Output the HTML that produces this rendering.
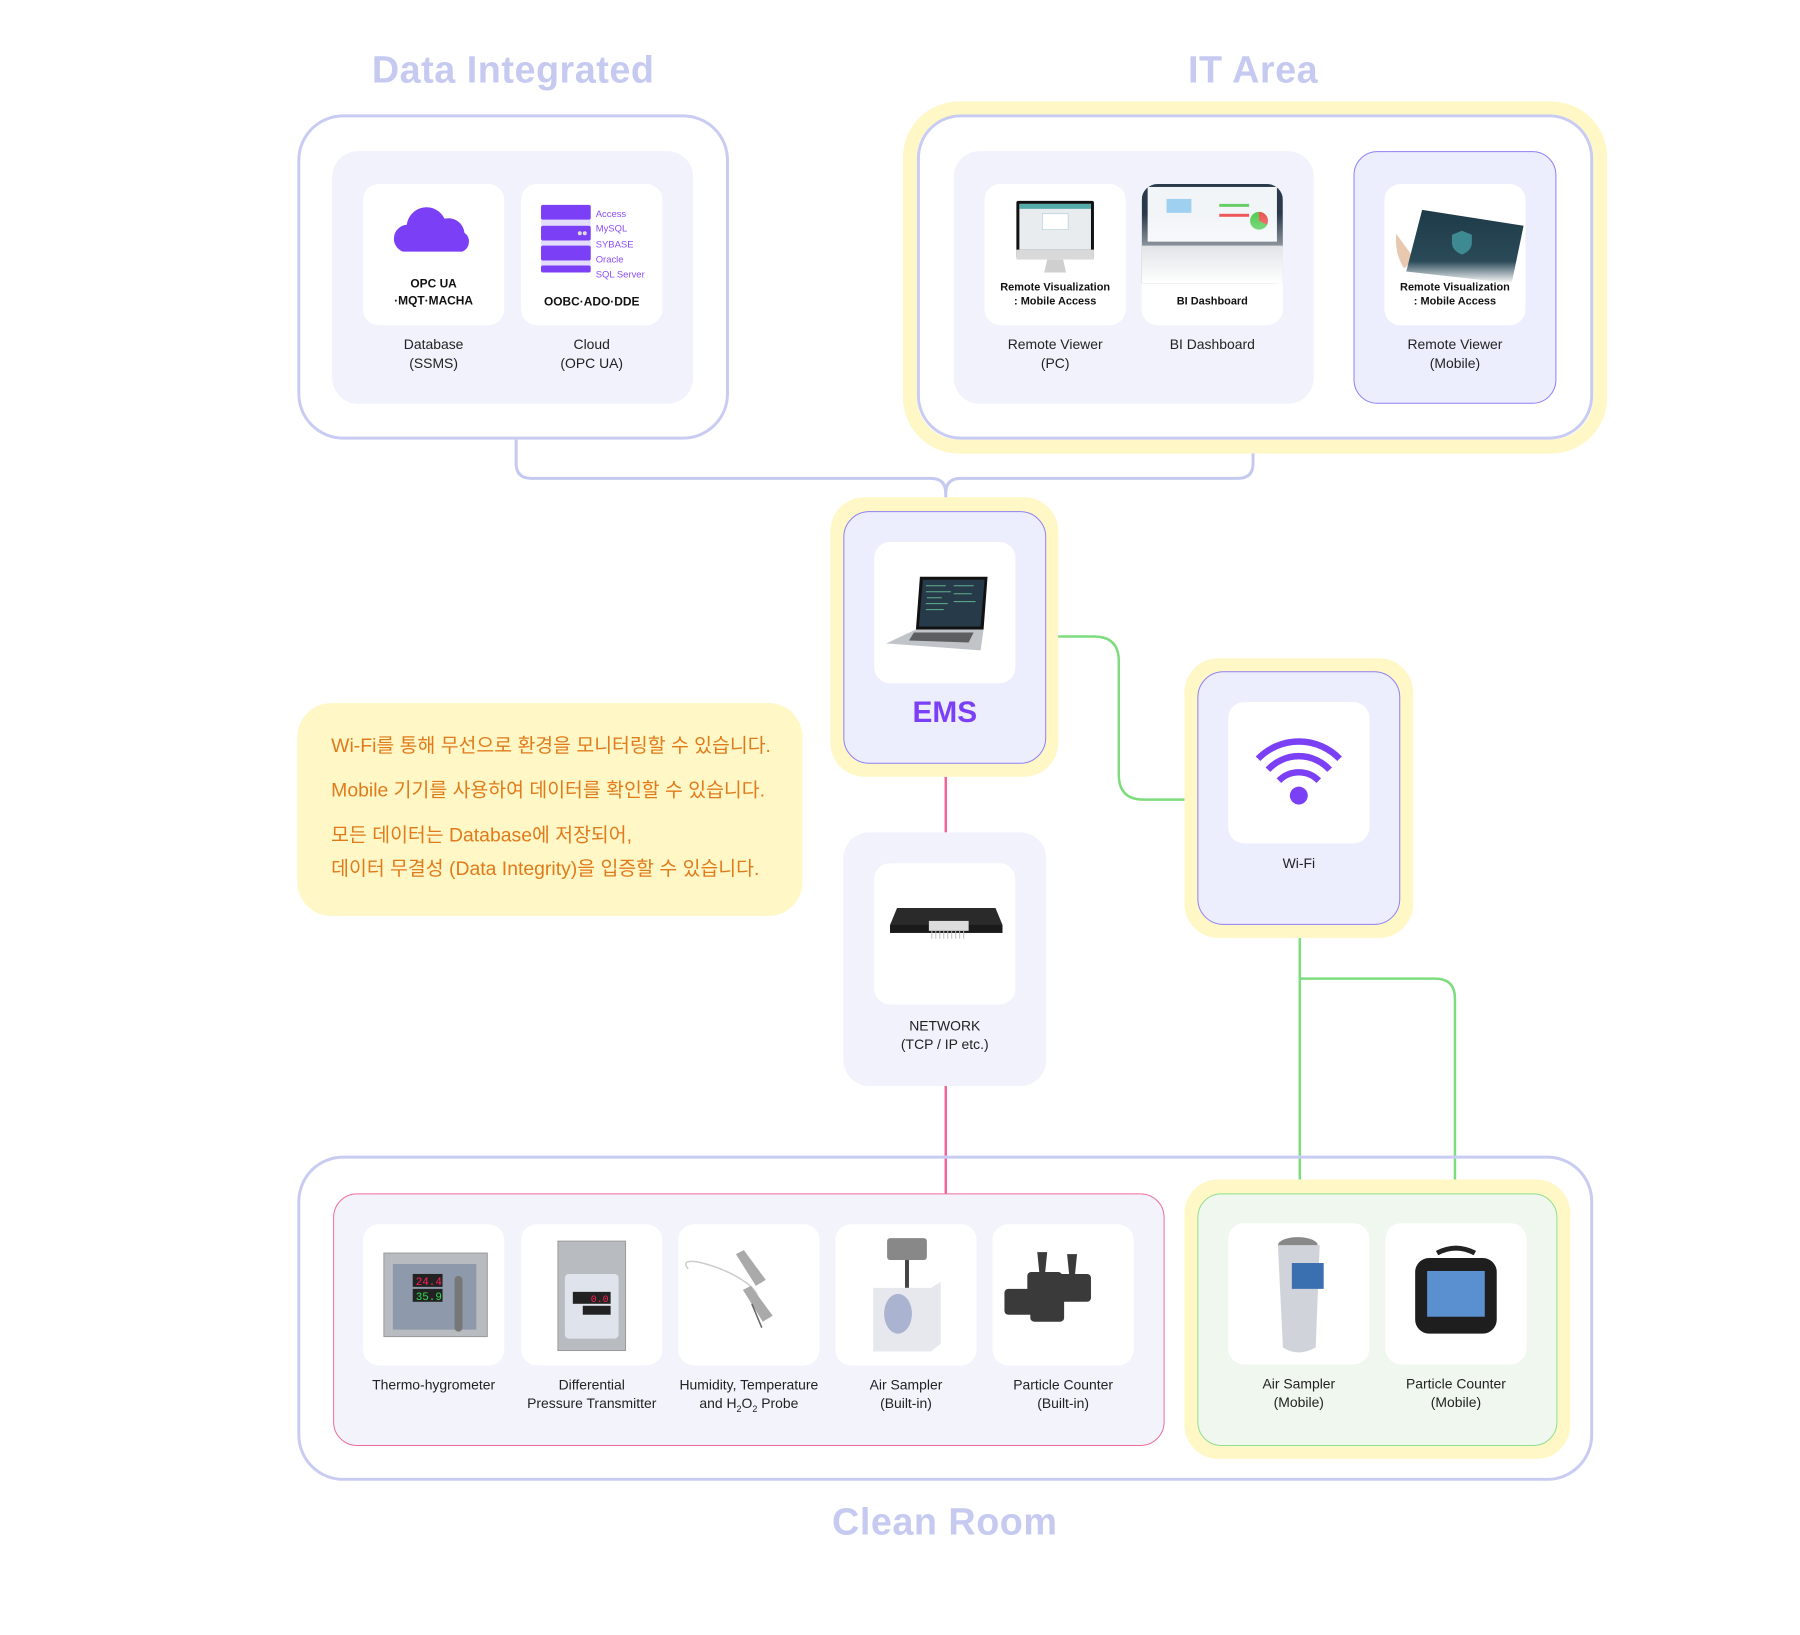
<!DOCTYPE html>
<html><head><meta charset="utf-8">
<style>
*{margin:0;padding:0;box-sizing:border-box}
body{width:1800px;height:1635px;background:#fff;position:relative;font-family:"Liberation Sans","Noto Sans CJK KR",sans-serif;color:#222;overflow:hidden}
#w{position:absolute;left:0;top:0;width:1800px;height:1635px;transform:scale(0.9945);transform-origin:0 0}
.a{position:absolute}
.title{position:absolute;font-weight:bold;color:#c6caf1;font-size:38px;text-align:center;width:500px;letter-spacing:0.5px}
.card{position:absolute;background:#fff;border-radius:16px;width:142px;height:142px;overflow:hidden}
.lbl{position:absolute;width:170px;text-align:center;font-size:14px;line-height:19px;color:#222}
.ct{position:absolute;left:0;width:142px;text-align:center;font-size:11px;font-weight:bold;line-height:14px;color:#111}
</style></head><body><div id="w">

<svg class="a" style="left:0;top:0" width="1800" height="1635">
<path d="M519 442 V466 Q519 481 534 481 H936 Q951 481 951 496 V514" fill="none" stroke="#c5c9f0" stroke-width="3"/>
<path d="M1260 456 V466 Q1260 481 1245 481 H966 Q951 481 951 496" fill="none" stroke="#c5c9f0" stroke-width="3"/>
<path d="M951 781 V837 M951 1092 V1200" fill="none" stroke="#f0649a" stroke-width="2.5"/>
<path d="M1052 640 H1100 Q1125 640 1125 665 V779 Q1125 804 1150 804 H1204" fill="none" stroke="#7ddc7d" stroke-width="2.5"/>
<path d="M1307 943 V1200 M1307 984 H1443 Q1463 984 1463 1004 V1200" fill="none" stroke="#7ddc7d" stroke-width="2.5"/>
</svg>

<div class="title" style="left:266px;top:50px">Data Integrated</div>
<div class="a" style="left:299px;top:115px;width:434px;height:327px;border:3px solid #c9ccf2;border-radius:46px"></div>
<div class="a" style="left:334px;top:152px;width:363px;height:254px;background:#f1f2fb;border-radius:26px"></div>
<div class="card" style="left:365px;top:185px">
 <svg class="a" style="left:0;top:0" width="142" height="80"><path d="M40 68 a14 14 0 0 1 4-27 a20 20 0 0 1 38-6 a16 16 0 0 1 20 14 a11 11 0 0 1 -2 19z" fill="#7b3ff6"/></svg>
 <div class="ct" style="top:92px;font-size:12px;line-height:17px">OPC UA<br>·MQT·MACHA</div>
</div>
<div class="card" style="left:524px;top:185px">
 <svg class="a" style="left:0;top:0" width="142" height="90">
  <rect x="20" y="21" width="50" height="15" rx="2" fill="#7b3ff6"/><rect x="20" y="36" width="50" height="6" fill="#e3dcfb"/>
  <rect x="20" y="42" width="50" height="15" rx="2" fill="#7b3ff6"/><circle cx="59" cy="49.5" r="2" fill="#ddd"/><circle cx="64" cy="49.5" r="2" fill="#ddd"/>
  <rect x="20" y="57" width="50" height="6" fill="#e3dcfb"/>
  <rect x="20" y="62" width="50" height="15" rx="2" fill="#7b3ff6"/><rect x="20" y="77" width="50" height="6" fill="#e3dcfb"/>
  <rect x="20" y="82" width="50" height="7" rx="2" fill="#7b3ff6"/>
 </svg>
 <div class="a" style="left:75px;top:23px;font-size:9.5px;line-height:15.3px;color:#8a4dfa">Access<br>MySQL<br>SYBASE<br>Oracle<br>SQL Server</div>
 <div class="ct" style="top:111px;font-size:12px">OOBC·ADO·DDE</div>
</div>
<div class="lbl" style="left:351px;top:337px">Database<br>(SSMS)</div>
<div class="lbl" style="left:510px;top:337px">Cloud<br>(OPC UA)</div>

<div class="title" style="left:1010px;top:50px">IT Area</div>
<div class="a" style="left:908px;top:102px;width:708px;height:354px;border:14px solid #fff7c5;border-radius:56px"></div>
<div class="a" style="left:922px;top:115px;width:680px;height:327px;border:3px solid #c9ccf2;border-radius:44px"></div>
<div class="a" style="left:959px;top:152px;width:362px;height:254px;background:#f1f2fb;border-radius:26px"></div>
<div class="card" style="left:990px;top:185px">
 <svg class="a" style="left:0;top:0" width="142" height="100">
  <rect x="32" y="17" width="78" height="58" rx="2" fill="#111"/>
  <rect x="35" y="20" width="72" height="46" fill="#e8ecef"/><rect x="35" y="20" width="72" height="5" fill="#5aa"/>
  <rect x="58" y="30" width="26" height="16" fill="#fff" stroke="#9bc" stroke-width=".5"/>
  <rect x="32" y="66" width="78" height="10" fill="#d9d9d9"/>
  <path d="M63 76 L60 89 H82 L79 76z" fill="#cfcfcf"/>
 </svg>
 <div class="ct" style="top:97px">Remote Visualization<br>: Mobile Access</div>
</div>
<div class="card" style="left:1148px;top:185px">
 <svg class="a" style="left:0;top:0" width="142" height="100">
  <defs><linearGradient id="fd" x1="0" y1="0" x2="0" y2="1"><stop offset="0" stop-color="#fff" stop-opacity="0"/><stop offset="1" stop-color="#fff"/></linearGradient></defs>
  <path d="M0 0 H142 V62 L135 100 H0z" fill="#2b3a4a"/>
  <rect x="6" y="3" width="130" height="55" fill="#f2f5f8"/>
  <rect x="25" y="15" width="25" height="14" fill="#9fd0f0"/><rect x="78" y="20" width="30" height="3" fill="#6c6"/><rect x="78" y="30" width="30" height="3" fill="#e55"/>
  <circle cx="118" cy="37" r="9" fill="#5c5"/><path d="M118 37 V28 A9 9 0 0 1 126 41z" fill="#e55"/>
  <rect x="0" y="62" width="142" height="38" fill="#c8ccd2"/>
  <rect x="0" y="30" width="142" height="70" fill="url(#fd)"/>
 </svg>
 <div class="ct" style="top:111px">BI Dashboard</div>
</div>
<div class="lbl" style="left:976px;top:337px">Remote Viewer<br>(PC)</div>
<div class="lbl" style="left:1134px;top:337px">BI Dashboard</div>
<div class="a" style="left:1361px;top:152px;width:204px;height:254px;background:#ecedfd;border:1.5px solid #8f7ff7;border-radius:24px"></div>
<div class="card" style="left:1392px;top:185px">
 <svg class="a" style="left:0;top:0" width="142" height="100">
  <defs><linearGradient id="tb" x1="0" y1="0" x2="0" y2="1"><stop offset="0" stop-color="#1e3a48"/><stop offset="0.7" stop-color="#2a4a58"/><stop offset="1" stop-color="#fff"/></linearGradient></defs>
  <path d="M12 50 Q10 70 20 85 L30 75z" fill="#e8c9b0"/>
  <path d="M38 26 L140 42 L128 100 L22 88z" fill="url(#tb)"/>
  <path d="M78 47 l10 4 v8 q0 8 -10 12 q-10 -4 -10 -12 v-8z" fill="#3d8a93"/>
 </svg>
 <div class="ct" style="top:97px">Remote Visualization<br>: Mobile Access</div>
</div>
<div class="lbl" style="left:1378px;top:337px">Remote Viewer<br>(Mobile)</div>

<div class="a" style="left:835px;top:500px;width:229px;height:281px;background:#fff7c5;border-radius:34px"></div>
<div class="a" style="left:848px;top:514px;width:204px;height:254px;background:#eceefd;border:1.5px solid #8f7ff7;border-radius:26px"></div>
<div class="card" style="left:879px;top:545px">
 <svg class="a" style="left:0;top:0" width="142" height="142">
  <path d="M46 35 L114 35 L110 88 L42 88z" fill="#111"/>
  <path d="M49 38 L111 38 L107 85 L45 85z" fill="#273a4a"/>
  <g stroke="#8fb" stroke-width="1" opacity=".6"><path d="M52 44h20M52 50h25M53 56h15M52 62h22M52 68h18M80 44h20M80 52h18M80 60h22"/></g>
  <path d="M42 88 L110 88 L107 109 L12 102z" fill="#c0c4c8"/>
  <path d="M40 91 L100 91 L95 101 L35 99z" fill="#333" opacity=".7"/>
 </svg>
</div>
<div class="a" style="left:848px;top:700px;width:204px;text-align:center;font-size:30px;font-weight:bold;color:#7b3ff6">EMS</div>

<div class="a" style="left:848px;top:837px;width:204px;height:255px;background:#f1f2fb;border-radius:26px"></div>
<div class="card" style="left:879px;top:868px">
 <svg class="a" style="left:0;top:0" width="142" height="142">
  <path d="M16 62 L23 45 L122 45 L129 62 V70 H16z" fill="#2a2a2a"/>
  <rect x="16" y="62" width="113" height="8" fill="#1a1a1a"/>
  <rect x="55" y="58" width="40" height="10" fill="#ddd"/>
  <g stroke="#bbb" stroke-width="1"><path d="M58 68v8M62 68v8M66 68v8M70 68v8M74 68v8M78 68v8M82 68v8M86 68v8M90 68v8"/></g>
 </svg>
</div>
<div class="lbl" style="left:865px;top:1022px">NETWORK<br>(TCP / IP etc.)</div>

<div class="a" style="left:1191px;top:662px;width:230px;height:281px;background:#fff7c5;border-radius:34px"></div>
<div class="a" style="left:1204px;top:675px;width:204px;height:255px;background:#eceefd;border:1.5px solid #8f7ff7;border-radius:26px"></div>
<div class="card" style="left:1235px;top:706px">
 <svg class="a" style="left:0;top:0" width="142" height="142">
  <g fill="none" stroke="#7b3ff6" stroke-width="6.5">
   <path d="M30 57 A57 57 0 0 1 112 57"/><path d="M40 68 A42 42 0 0 1 102 68"/><path d="M51 79 A28 28 0 0 1 91 79"/>
  </g>
  <circle cx="71" cy="94" r="9" fill="#7b3ff6"/>
 </svg>
</div>
<div class="lbl" style="left:1221px;top:859px">Wi-Fi</div>

<div class="a" style="left:299px;top:707px;width:508px;height:214px;background:#fff7c5;border-radius:34px"></div>
<div class="a" style="left:333px;top:737px;font-size:19.5px;line-height:26px;color:#e07b1c;white-space:nowrap">
 <div>Wi-Fi를 통해 무선으로 환경을 모니터링할 수 있습니다.</div>
 <div style="margin-top:19px">Mobile 기기를 사용하여 데이터를 확인할 수 있습니다.</div>
 <div style="margin-top:19px">모든 데이터는 Database에 저장되어,</div>
 <div style="margin-top:8px">데이터 무결성 (Data Integrity)을 입증할 수 있습니다.</div>
</div>

<div class="a" style="left:299px;top:1162px;width:1303px;height:327px;border:3px solid #c9ccf2;border-radius:46px"></div>
<div class="a" style="left:335px;top:1200px;width:836px;height:254px;background:#f3f3fc;border:1.5px solid #f06b9a;border-radius:24px"></div>
<div class="title" style="left:700px;top:1510px">Clean Room</div>

<div class="card" style="left:365px;top:1231px">
 <svg class="a" style="left:0;top:0" width="142" height="142">
  <rect x="21" y="29" width="104" height="84" fill="#b8bcc0" stroke="#999"/>
  <rect x="30" y="40" width="84" height="66" fill="#8e9aab"/>
  <rect x="50" y="50" width="30" height="13" fill="#222"/><text x="53" y="61" font-size="11" fill="#f25" font-family="Liberation Mono">24.4</text>
  <rect x="50" y="65" width="30" height="13" fill="#222"/><text x="53" y="76" font-size="11" fill="#3d5" font-family="Liberation Mono">35.9</text>
  <rect x="92" y="52" width="8" height="56" rx="4" fill="#777"/>
 </svg>
</div>
<div class="card" style="left:524px;top:1231px">
 <svg class="a" style="left:0;top:0" width="142" height="142">
  <rect x="37" y="17" width="68" height="110" fill="#b8bcc0" stroke="#999"/>
  <rect x="44" y="50" width="54" height="65" rx="4" fill="#dfe4ec"/>
  <rect x="52" y="68" width="38" height="12" fill="#222"/><text x="70" y="78" font-size="10" fill="#f25" font-family="Liberation Mono">0.0</text>
  <rect x="62" y="82" width="28" height="9" fill="#222"/>
 </svg>
</div>
<div class="card" style="left:682px;top:1231px">
 <svg class="a" style="left:0;top:0" width="142" height="142">
  <path d="M10 45 Q2 35 20 38 Q50 45 70 60 Q80 68 80 75" fill="none" stroke="#ccc" stroke-width="1.5"/>
  <path d="M58 30 l8 -4 l22 30 l-10 6z" fill="#aaa"/>
  <path d="M65 66 l8 -4 l22 30 l-10 6z" fill="#aaa"/>
  <path d="M74 80 l10 24" stroke="#666" stroke-width="1.5"/>
 </svg>
</div>
<div class="card" style="left:840px;top:1231px">
 <svg class="a" style="left:0;top:0" width="142" height="142">
  <rect x="52" y="14" width="40" height="22" rx="3" fill="#888"/>
  <rect x="70" y="36" width="4" height="28" fill="#444"/>
  <path d="M38 64 H96 L106 58 V120 L96 128 H38z" fill="#e6e8ee"/>
  <ellipse cx="63" cy="90" rx="14" ry="20" fill="#aab3cf"/>
 </svg>
</div>
<div class="card" style="left:998px;top:1231px">
 <svg class="a" style="left:0;top:0" width="142" height="142">
  <g fill="#3a3a3a">
   <rect x="12" y="65" width="30" height="26" rx="4"/><rect x="35" y="48" width="35" height="28" rx="4"/>
   <rect x="64" y="50" width="35" height="28" rx="4"/><rect x="38" y="70" width="34" height="28" rx="4"/>
   <path d="M45 28 h10 l-2 20 h-6z M75 30 h10 l-2 20 h-6z"/>
  </g>
 </svg>
</div>
<div class="lbl" style="left:351px;top:1383px">Thermo-hygrometer</div>
<div class="lbl" style="left:510px;top:1383px">Differential<br>Pressure Transmitter</div>
<div class="lbl" style="left:668px;top:1383px">Humidity, Temperature<br>and H<sub style="font-size:9px">2</sub>O<sub style="font-size:9px">2</sub> Probe</div>
<div class="lbl" style="left:826px;top:1383px">Air Sampler<br>(Built-in)</div>
<div class="lbl" style="left:984px;top:1383px">Particle Counter<br>(Built-in)</div>

<div class="a" style="left:1191px;top:1186px;width:388px;height:281px;background:#fff7c5;border-radius:34px"></div>
<div class="a" style="left:1204px;top:1200px;width:362px;height:254px;background:#eff7ee;border:1.5px solid #8fe08f;border-radius:24px"></div>
<div class="card" style="left:1235px;top:1230px">
 <svg class="a" style="left:0;top:0" width="142" height="142">
  <ellipse cx="70" cy="22" rx="20" ry="8" fill="#888"/>
  <path d="M50 22 H92 L88 125 Q70 135 55 125z" fill="#d0d4da"/>
  <rect x="64" y="40" width="32" height="26" fill="#3a6fb0"/>
 </svg>
</div>
<div class="card" style="left:1393px;top:1230px">
 <svg class="a" style="left:0;top:0" width="142" height="142">
  <path d="M52 30 Q71 20 90 30" fill="none" stroke="#222" stroke-width="5"/>
  <rect x="30" y="35" width="82" height="76" rx="14" fill="#1e1e1e"/>
  <rect x="42" y="48" width="58" height="46" fill="#5a8fd0"/>
 </svg>
</div>
<div class="lbl" style="left:1221px;top:1382px">Air Sampler<br>(Mobile)</div>
<div class="lbl" style="left:1379px;top:1382px">Particle Counter<br>(Mobile)</div>

</div></body></html>
